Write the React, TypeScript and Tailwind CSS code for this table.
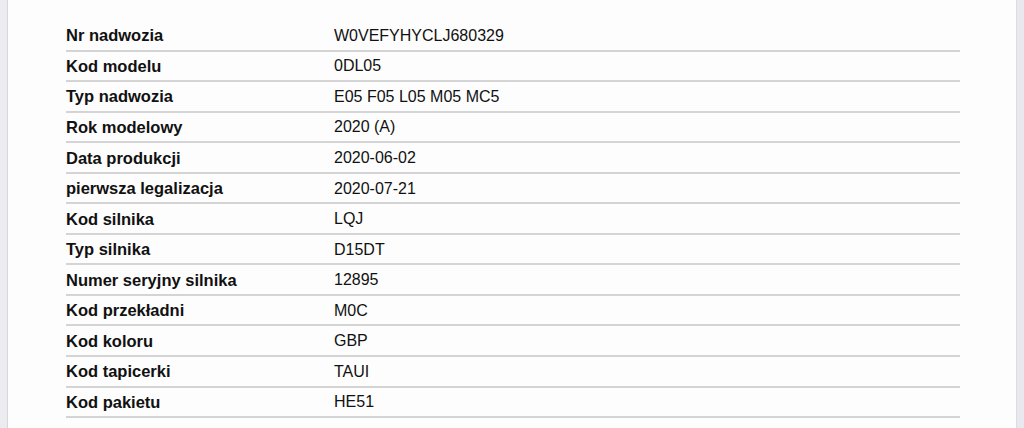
import React from "react";

const rows: [string, string][] = [
  ["Nr nadwozia", "W0VEFYHYCLJ680329"],
  ["Kod modelu", "0DL05"],
  ["Typ nadwozia", "E05 F05 L05 M05 MC5"],
  ["Rok modelowy", "2020 (A)"],
  ["Data produkcji", "2020-06-02"],
  ["pierwsza legalizacja", "2020-07-21"],
  ["Kod silnika", "LQJ"],
  ["Typ silnika", "D15DT"],
  ["Numer seryjny silnika", "12895"],
  ["Kod przekładni", "M0C"],
  ["Kod koloru", "GBP"],
  ["Kod tapicerki", "TAUI"],
  ["Kod pakietu", "HE51"],
];

export default function App() {
  return (
    <div
      className="flex h-[428px] w-[1024px] overflow-hidden bg-[#fdfdfd]"
      style={{ fontFamily: '"Liberation Sans", Arial, Helvetica, sans-serif' }}
    >
      <div className="w-[8px] shrink-0 border-r border-[#d6d6dc] bg-[#ececf0]" />
      <div className="flex-1 pl-[58px] pt-[21px]">
        <div className="flex w-[894px] flex-col">
          {rows.map(([k, v]) => (
            <div
              key={k}
              className="flex h-[30.56px] items-center border-b-2 border-[#d4d4d4] pt-[1px] text-[#111]"
            >
              <div className="w-[268px] shrink-0 text-[16.5px] font-bold">{k}</div>
              <div className="text-[16px]">{v}</div>
            </div>
          ))}
        </div>
      </div>
      <div className="w-[8px] shrink-0 border-l border-[#dcdce4] bg-[#e8e8ee]" />
    </div>
  );
}
